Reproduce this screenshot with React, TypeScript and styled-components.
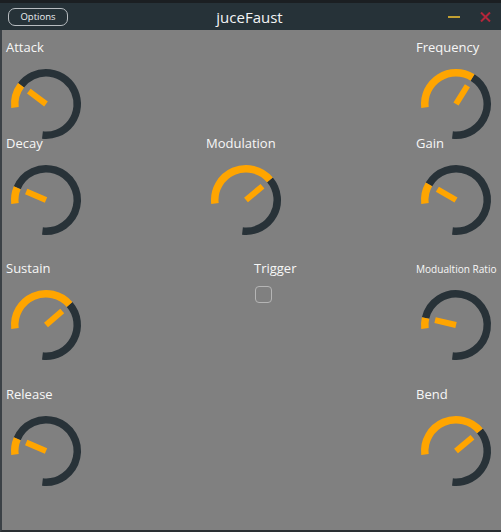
import React from "react";
import styled, { createGlobalStyle } from "styled-components";

const GlobalStyle = createGlobalStyle`
  html, body {
    margin: 0;
    padding: 0;
    background: #808080;
  }
  body {
    font-family: "Open Sans", "DejaVu Sans", sans-serif;
  }
`;

const ORANGE = "#ffa500";
const DARK = "#283238";
const START = 263.5;
const END = 546.5;

const Window = styled.div`
  width: 501px;
  height: 532px;
  display: flex;
  flex-direction: column;
  box-sizing: border-box;
  padding-top: 3px;
  background: #1b1f22;
  overflow: hidden;
`;

const TitleBar = styled.div`
  height: 27px;
  flex: none;
  display: grid;
  grid-template-columns: 1fr auto 1fr;
  align-items: center;
  padding: 0 10px 0 8px;
  background: #263238;
`;

const OptionsButton = styled.button`
  justify-self: start;
  width: 60px;
  height: 18px;
  padding: 0;
  border: 1px solid #b7bcc0;
  border-radius: 7px;
  background: transparent;
  color: #eceff1;
  font-family: "Open Sans", sans-serif;
  font-size: 9.5px;
  line-height: 16px;
  cursor: pointer;
`;

const Title = styled.div`
  color: #f2f4f5;
  font-size: 15px;
  line-height: 20px;
  padding-top: 1px;
`;

const WindowControls = styled.div`
  justify-self: end;
  display: flex;
  align-items: center;
  gap: 20px;
`;

const Content = styled.div`
  flex: 1;
  min-height: 0;
  display: grid;
  grid-template-columns: 200px 210px 1fr;
  grid-template-rows: 96px 124.5px 126px 1fr;
  padding: 8px 0 0 4px;
  background: #808080;
  border-left: 2px solid #3b4146;
  border-bottom: 2px solid #2a2f33;
`;

const Cell = styled.div<{ $indent?: number }>`
  display: flex;
  flex-direction: column;
  align-items: flex-start;
  min-height: 0;
  padding-left: ${(p) => p.$indent ?? 0}px;
`;

const Label = styled.div<{ $small?: boolean }>`
  flex: none;
  box-sizing: border-box;
  height: 18px;
  color: #f7f7f7;
  white-space: nowrap;
  font-size: ${(p) => (p.$small ? "11.5px" : "13px")};
  line-height: 18px;
  padding-top: ${(p) => (p.$small ? "1px" : "0")};
  transform: ${(p) => (p.$small ? "scaleX(0.875)" : "none")};
  transform-origin: left center;
`;

const KnobSvg = styled.svg`
  display: block;
  flex: none;
  width: 80px;
  height: 80px;
  margin-top: 8px;
`;

const CheckBox = styled.div`
  flex: none;
  box-sizing: border-box;
  width: 17px;
  height: 17px;
  margin: 9.5px 0 0 1px;
  border: 1.3px solid #b5b5b5;
  border-radius: 4px;
`;

function polar(a: number, r: number) {
  const rad = (a * Math.PI) / 180;
  return [40 + r * Math.sin(rad), 40 - r * Math.cos(rad)];
}

function arcPath(a1: number, a2: number, r: number) {
  const [x1, y1] = polar(a1, r);
  const [x2, y2] = polar(a2, r);
  const large = a2 - a1 > 180 ? 1 : 0;
  return `M ${x1.toFixed(2)} ${y1.toFixed(2)} A ${r} ${r} 0 ${large} 1 ${x2.toFixed(2)} ${y2.toFixed(2)}`;
}

const Knob: React.FC<{ angle: number }> = ({ angle }) => (
  <KnobSvg viewBox="0 0 80 80">
    <path d={arcPath(angle, END, 31.25)} stroke={DARK} strokeWidth={7.5} fill="none" />
    <path d={arcPath(START, angle, 31.25)} stroke={ORANGE} strokeWidth={7.5} fill="none" />
    <rect x={-3} y={-21.5} width={6} height={21.5} fill={ORANGE} transform={`translate(40 40) rotate(${angle})`} />
  </KnobSvg>
);

const KnobCell: React.FC<{ label: string; angle: number; small?: boolean }> = ({ label, angle, small }) => (
  <Cell>
    <Label $small={small}>{label}</Label>
    <Knob angle={angle} />
  </Cell>
);

export default function App() {
  return (
    <>
      <GlobalStyle />
      <Window>
        <TitleBar>
          <OptionsButton>Options</OptionsButton>
          <Title>juceFaust</Title>
          <WindowControls>
            <svg width="12" height="4" viewBox="0 0 12 4">
              <rect x="0" y="1" width="12" height="2" fill="#c2a032" />
            </svg>
            <svg width="11" height="10" viewBox="0 0 11 10">
              <path d="M1 0.5 L10 9.5 M10 0.5 L1 9.5" stroke="#b3263a" strokeWidth="2" fill="none" />
            </svg>
          </WindowControls>
        </TitleBar>
        <Content>
          <KnobCell label="Attack" angle={307} />
          <Cell />
          <KnobCell label="Frequency" angle={392} />

          <KnobCell label="Decay" angle={293} />
          <KnobCell label="Modulation" angle={410} />
          <KnobCell label="Gain" angle={300} />

          <KnobCell label="Sustain" angle={409} />
          <Cell $indent={48}>
            <Label>Trigger</Label>
            <CheckBox />
          </Cell>
          <KnobCell label="Modualtion Ratio" angle={283} small />

          <KnobCell label="Release" angle={293} />
          <Cell />
          <KnobCell label="Bend" angle={410} />
        </Content>
      </Window>
    </>
  );
}
